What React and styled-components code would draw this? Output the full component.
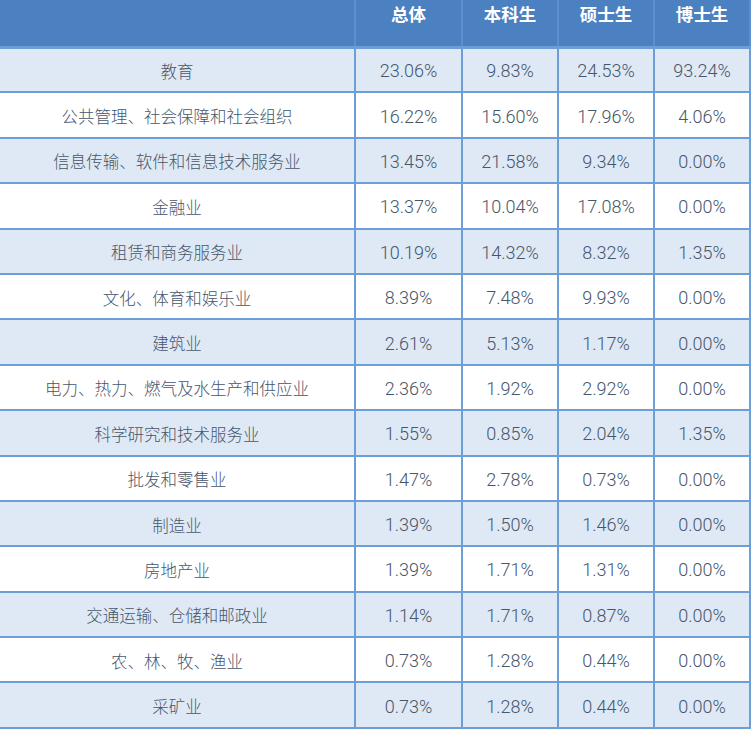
import React from 'react';
import styled, { createGlobalStyle } from 'styled-components';

const GlobalStyle = createGlobalStyle`
  body {
    margin: 0;
    background: #ffffff;
  }
`;

const Table = styled.table`
  width: 750px;
  table-layout: fixed;
  border-collapse: collapse;
  color: #46566b;
`;

const Col = styled.col`
  width: ${(p) => p.$w}px;
`;

const HeadCell = styled.th`
  height: 47px;
  padding: 3px 0 0;
  box-sizing: border-box;
  vertical-align: top;
  background: #4b80c1;
  color: #ffffff;
  font-family: 'Noto Sans CJK SC', sans-serif;
  font-size: 17.5px;
  font-weight: 600;
  line-height: 22px;
  text-align: center;
  border-left: 2px solid #5c90cf;
  border-bottom: 3px solid #6b9dd6;
  &:first-child {
    border-left: none;
  }
  &:last-child {
    border-right: 2px solid #5c90cf;
  }
`;

const Row = styled.tr`
  background: ${(p) => (p.$alt ? '#dfe9f5' : '#ffffff')};
`;

const Cell = styled.td`
  height: 45.4px;
  padding: 2px 0 0;
  box-sizing: border-box;
  text-align: center;
  vertical-align: middle;
  font-size: ${(p) => (p.$label ? '16.5px' : '18px')};
  font-weight: 300;
  font-family: ${(p) =>
    p.$label
      ? "'Noto Sans CJK SC', sans-serif"
      : "Roboto, 'Noto Sans CJK SC', sans-serif"};
  border-left: 2px solid #6c9fd8;
  border-bottom: 2px solid #6c9fd8;
  &:first-child {
    border-left: none;
  }
  &:last-child {
    border-right: 2px solid #6c9fd8;
  }
`;

const widths = [355, 107, 96, 96, 96];

const columns = ['总体', '本科生', '硕士生', '博士生'];

const rows = [
  ['教育', '23.06%', '9.83%', '24.53%', '93.24%'],
  ['公共管理、社会保障和社会组织', '16.22%', '15.60%', '17.96%', '4.06%'],
  ['信息传输、软件和信息技术服务业', '13.45%', '21.58%', '9.34%', '0.00%'],
  ['金融业', '13.37%', '10.04%', '17.08%', '0.00%'],
  ['租赁和商务服务业', '10.19%', '14.32%', '8.32%', '1.35%'],
  ['文化、体育和娱乐业', '8.39%', '7.48%', '9.93%', '0.00%'],
  ['建筑业', '2.61%', '5.13%', '1.17%', '0.00%'],
  ['电力、热力、燃气及水生产和供应业', '2.36%', '1.92%', '2.92%', '0.00%'],
  ['科学研究和技术服务业', '1.55%', '0.85%', '2.04%', '1.35%'],
  ['批发和零售业', '1.47%', '2.78%', '0.73%', '0.00%'],
  ['制造业', '1.39%', '1.50%', '1.46%', '0.00%'],
  ['房地产业', '1.39%', '1.71%', '1.31%', '0.00%'],
  ['交通运输、仓储和邮政业', '1.14%', '1.71%', '0.87%', '0.00%'],
  ['农、林、牧、渔业', '0.73%', '1.28%', '0.44%', '0.00%'],
  ['采矿业', '0.73%', '1.28%', '0.44%', '0.00%'],
];

const App = () => (
  <>
    <GlobalStyle />
    <Table>
      <colgroup>
        {widths.map((w, i) => (
          <Col key={i} $w={w} />
        ))}
      </colgroup>
      <thead>
        <tr>
          <HeadCell />
          {columns.map((c) => (
            <HeadCell key={c}>{c}</HeadCell>
          ))}
        </tr>
      </thead>
      <tbody>
        {rows.map((r, i) => (
          <Row key={r[0]} $alt={i % 2 === 0}>
            {r.map((v, j) => (
              <Cell key={j} $label={j === 0}>
                {v}
              </Cell>
            ))}
          </Row>
        ))}
      </tbody>
    </Table>
  </>
);

export default App;
